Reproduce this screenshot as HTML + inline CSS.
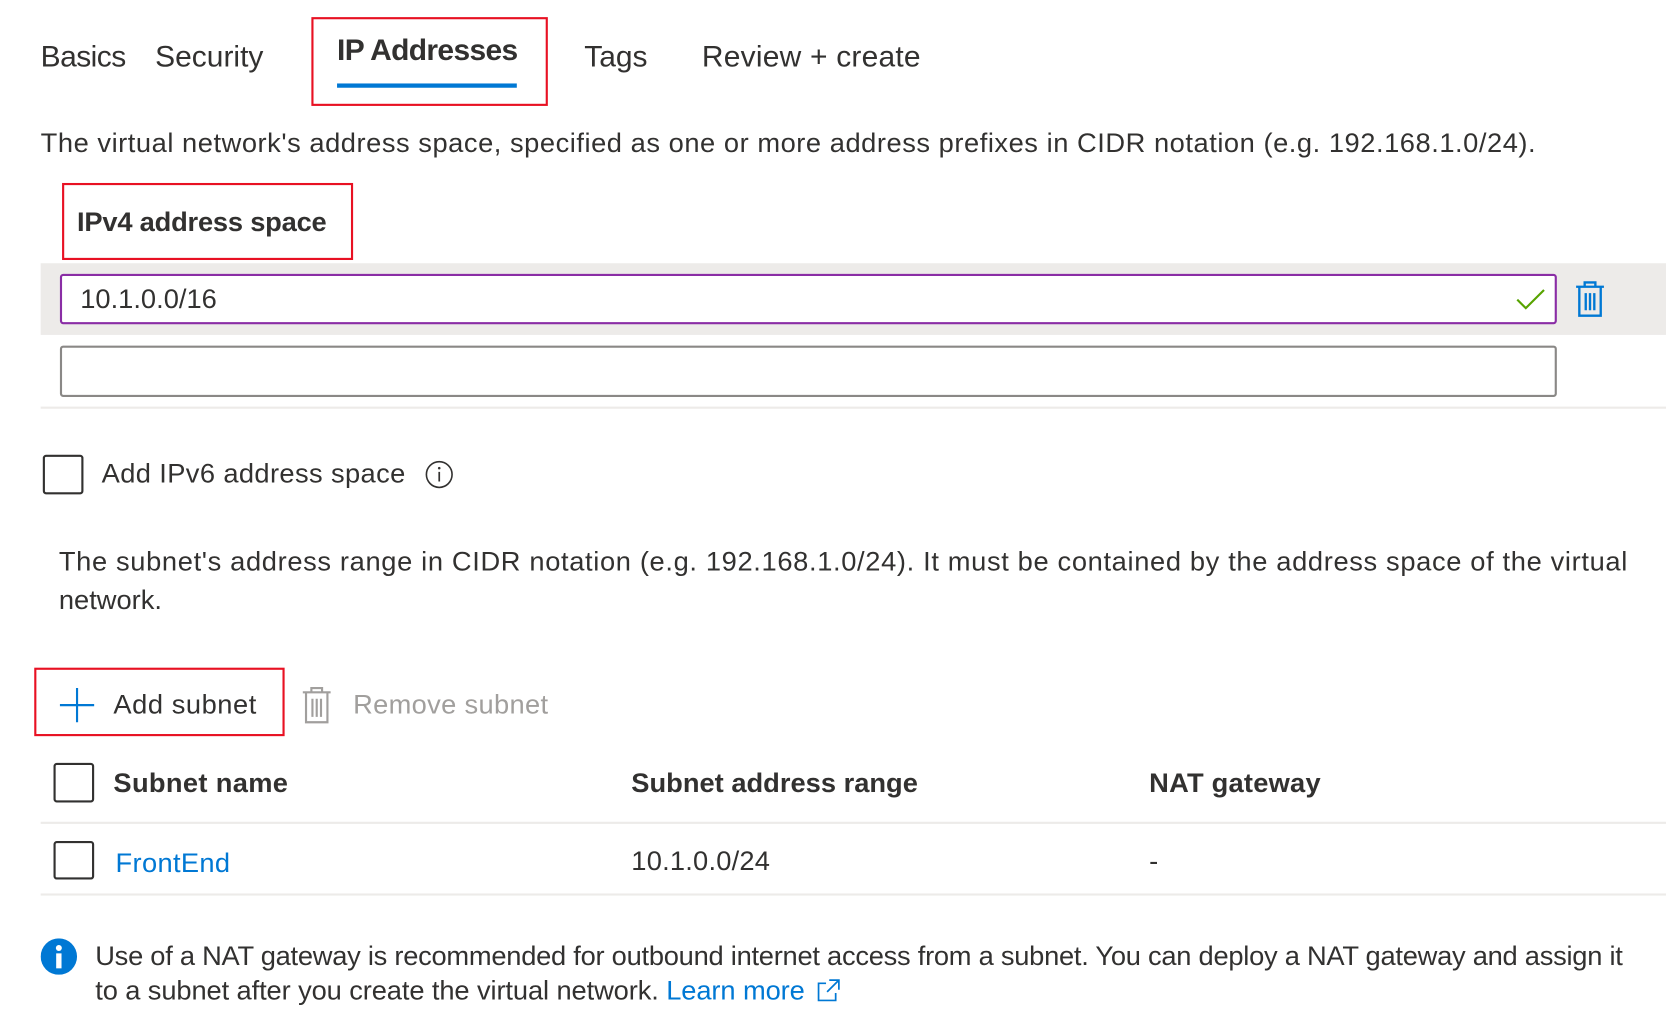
<!DOCTYPE html>
<html><head><meta charset="utf-8"><style>
html,body{margin:0;padding:0;background:#fff;overflow:hidden;width:1677px;height:1023px}
#w{position:absolute;left:0;top:0;width:1570px;height:960px;transform:scale(1.07);transform-origin:0 0;font-family:"Segoe UI","Liberation Sans",sans-serif;color:#323130}
.a{position:absolute;white-space:nowrap;line-height:1}
.t{font-size:28px}
.b{font-size:25.5px}
.red{position:absolute;border:2px solid #e81123;box-sizing:border-box}
.cb{position:absolute;border:2px solid #323130;border-radius:3px;box-sizing:border-box}
.ln{position:absolute;height:2px;background:#edebe9;left:38px;width:1519px}
</style></head><body><div id="w">
<div class="a t" style="left:38px;top:39px;letter-spacing:-0.5px">Basics</div>
<div class="a t" style="left:145px;top:39px">Security</div>
<div class="a t" style="left:315px;top:33px;font-weight:600;letter-spacing:-0.6px">IP Addresses</div>
<div style="position:absolute;left:315px;top:78px;width:168px;height:4px;background:#0078d4"></div>
<div class="red" style="left:291px;top:16px;width:221px;height:83px"></div>
<div class="a t" style="left:546px;top:39px">Tags</div>
<div class="a t" style="left:656px;top:39px;letter-spacing:0.2px">Review + create</div>

<div class="a b" style="left:38px;top:122px;letter-spacing:0.5px">The virtual network's address space, specified as one or more address prefixes in CIDR notation (e.g. 192.168.1.0/24).</div>
<div class="red" style="left:58px;top:171px;width:272px;height:72px"></div>
<div class="a b" style="left:72px;top:196px;font-weight:600;letter-spacing:-0.2px">IPv4 address space</div>

<div style="position:absolute;left:38px;top:246px;width:1519px;height:67px;background:#edebe9"></div>
<div style="position:absolute;left:56px;top:256px;width:1399px;height:47px;border:2px solid #8a2da5;border-radius:3px;background:#fff;box-sizing:border-box"></div>
<div class="a b" style="left:75px;top:268px">10.1.0.0/16</div>
<svg style="position:absolute;left:1416px;top:268px" width="30" height="24"><path d="M2 12 L10 20 L27 3" fill="none" stroke="#57a300" stroke-width="2"/></svg>
<svg style="position:absolute;left:1471px;top:262px" width="30" height="36" fill="none" stroke="#0078d4" stroke-width="2.2"><path d="M2 6H28M10 6V2H20V6M5 6V33H25V6M11 12V28M15 12V28M19 12V28"/></svg>
<div style="position:absolute;left:56px;top:323px;width:1399px;height:48px;border:2px solid #8a8886;border-radius:3px;box-sizing:border-box"></div>
<div class="ln" style="top:380px"></div>

<div class="cb" style="left:40px;top:425px;width:38px;height:37px"></div>
<div class="a b" style="left:95px;top:431px;letter-spacing:0.35px">Add IPv6 address space</div>
<svg style="position:absolute;left:397px;top:430px" width="27" height="27"><circle cx="13.5" cy="13.5" r="12" fill="none" stroke="#323130" stroke-width="1.5"/><path d="M13.5 11V20" stroke="#323130" stroke-width="1.6"/><circle cx="13.5" cy="7.5" r="1.2" fill="#323130"/></svg>

<div class="a b" style="left:55px;top:513px;letter-spacing:0.6px">The subnet's address range in CIDR notation (e.g. 192.168.1.0/24). It must be contained by the address space of the virtual</div>
<div class="a b" style="left:55px;top:549px">network.</div>

<div class="red" style="left:32px;top:624px;width:234px;height:64px"></div>
<svg style="position:absolute;left:55px;top:642px" width="34" height="34"><path d="M17 1V33M1 17H33" stroke="#0078d4" stroke-width="2"/></svg>
<div class="a b" style="left:106px;top:647px;letter-spacing:0.5px">Add subnet</div>
<svg style="position:absolute;left:282px;top:641px" width="28" height="36" fill="none" stroke="#a19f9d" stroke-width="2"><path d="M1 6H27M9 6V2H19V6M4 6V34H24V6M10 12V29M14 12V29M18 12V29"/></svg>
<div class="a b" style="left:330px;top:647px;color:#a19f9d;letter-spacing:0.3px">Remove subnet</div>

<div class="cb" style="left:50px;top:713px;width:38px;height:37px"></div>
<div class="a b" style="left:106px;top:720px;font-weight:600;letter-spacing:0.3px">Subnet name</div>
<div class="a b" style="left:590px;top:720px;font-weight:600;letter-spacing:0px">Subnet address range</div>
<div class="a b" style="left:1074px;top:720px;font-weight:600;letter-spacing:0.2px">NAT gateway</div>
<div class="ln" style="top:768px"></div>
<div class="cb" style="left:50px;top:786px;width:38px;height:36px"></div>
<div class="a b" style="left:108px;top:795px;color:#0078d4;letter-spacing:0.3px">FrontEnd</div>
<div class="a b" style="left:590px;top:793px;letter-spacing:0.2px">10.1.0.0/24</div>
<div class="a b" style="left:1074px;top:793px">-</div>
<div class="ln" style="top:835px"></div>

<svg style="position:absolute;left:38px;top:877px" width="34" height="34"><circle cx="17" cy="17" r="17" fill="#0078d4"/><rect x="14.5" y="14" width="5" height="14" fill="#fff"/><circle cx="17" cy="9" r="2.8" fill="#fff"/></svg>
<div class="a b" style="left:89px;top:882px;letter-spacing:-0.24px">Use of a NAT gateway is recommended for outbound internet access from a subnet. You can deploy a NAT gateway and assign it</div>
<div class="a b" style="left:89px;top:914px;letter-spacing:-0.1px">to a subnet after you create the virtual network. <span style="color:#0078d4">Learn more</span></div>
<svg style="position:absolute;left:763px;top:914px" width="24" height="24" fill="none" stroke="#0078d4" stroke-width="1.6"><path d="M9 5H2V21H18V14M12 2H21V11M21 2L10 13"/></svg>
</div></body></html>
